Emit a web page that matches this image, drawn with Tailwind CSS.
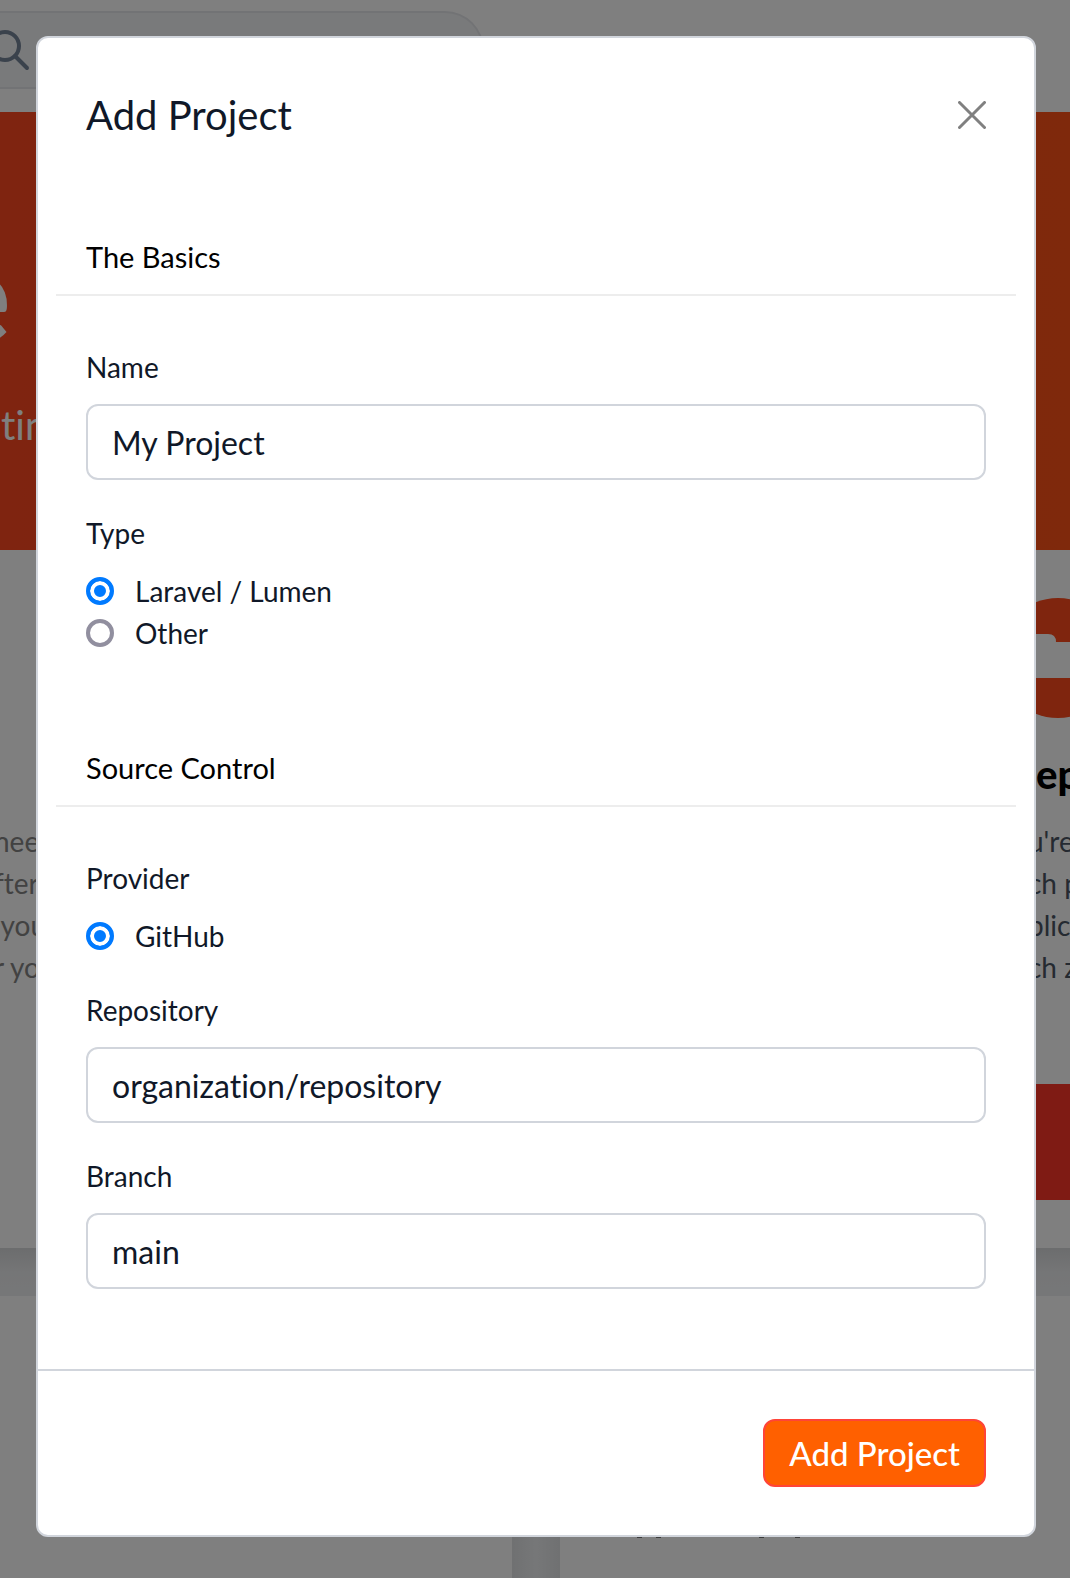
<!DOCTYPE html>
<html lang="en">
<head>
<meta charset="utf-8">
<title>Add Project</title>
<script src="https://cdn.jsdelivr.net/npm/@tailwindcss/browser@4"></script>
</head>
<body class="relative min-h-screen overflow-x-hidden bg-gray-100 font-['Lato','Open_Sans',sans-serif] text-[28px] leading-[42px] text-gray-900 [font-variant-ligatures:none]">

  <!-- Page behind the dialog -->
  <div class="absolute inset-0 flex flex-col overflow-hidden" aria-hidden="true">
    <div class="h-28 shrink-0 bg-white pt-[11px]">
      <div class="flex h-[78px] w-[484px] items-center rounded-r-full border-2 border-l-0 border-gray-200 bg-gray-100">
        <svg class="-ml-3 h-11 w-11 text-[#758499]" viewBox="0 0 44 44" fill="none" stroke="currentColor" stroke-width="4" stroke-linecap="round"><circle cx="17" cy="18" r="14"/><path d="M27 28l12 12"/></svg>
      </div>
    </div>
    <div class="h-[438px] shrink-0 bg-linear-to-r from-[#fe4820] to-[#fe5218] pt-[101px] text-white">
      <div class="-ml-[58px] text-[128px] leading-[160px] font-black">e</div>
      <div class="ml-px pt-[22px] text-[40px] leading-[60px]">tin</div>
    </div>
    <div class="flex h-[698px] shrink-0 justify-between bg-white text-gray-600">
      <div class="-ml-1.5 whitespace-pre pt-[270px] text-[#848484]">need
fter
 you
r your</div>
      <div class="w-[42px] pt-12">
        <svg class="-ml-8 h-[120px] w-[120px] max-w-none" viewBox="0 0 120 120"><circle cx="62" cy="60" r="60" fill="#fe4a1c"/><path d="M0 36h52q8 0 8 8h62v36H0z" fill="#fff"/></svg>
        <div class="ml-2 pt-[26px] text-[40px] leading-[60px] font-black text-black">ep</div>
        <div class="whitespace-pre pt-4 text-[#4b5563]">u're
ch p
plic
ch z</div>
        <div class="mt-24 h-[116px] bg-[#fe3628]"></div>
      </div>
    </div>
    <div class="h-12 shrink-0 bg-linear-to-b from-[#d8dadc] via-[#ebecee] to-[#edeff1]"></div>
    <div class="flex grow bg-white">
      <div class="w-[512px] bg-white"></div>
      <div class="w-12 bg-linear-to-r from-[#e0e2e4] via-[#edeff1] to-[#e0e2e4]"></div>
      <!-- Lower edge of the card's heading -->
      <svg class="mt-60 ml-[77px] h-[2px] w-[166px]" viewBox="0 0 166 2" fill="#777"><path d="M0 0h5v2H0zM19 0h5v2h-5zM122 0h5v2h-5zM158 0h5v2h-5z"/></svg>
    </div>
  </div>
  <div class="absolute inset-0 bg-black/50"></div>

  <div role="dialog" aria-labelledby="dialog-title" class="relative mt-9 mr-[34px] mb-9 ml-9 rounded-xl border-2 border-gray-300 bg-white">
    <header class="flex items-center justify-between px-12 pt-[47px] pb-[49px]">
      <h2 id="dialog-title" class="text-[40px] leading-[60px]">Add Project</h2>
      <button type="button" aria-label="Close" class="text-[#808080]">
        <svg class="h-7 w-7" viewBox="0 0 28 28" fill="none" stroke="currentColor" stroke-width="3" stroke-linecap="round"><path d="M1.500 1.500l25 25M26.500 1.500l-25 25"/></svg>
      </button>
    </header>

    <form id="project-form" class="px-[18px] pb-20">
      <section>
        <h3 class="border-b-2 border-[#ededed] px-[30px] pt-[42px] pb-4 text-[29px] text-black">The Basics</h3>
        <div class="flex flex-col gap-8 px-[30px] pt-[50px]">
          <div class="flex flex-col gap-4">
            <label for="name">Name</label>
            <input id="name" type="text" value="My Project" class="h-[76px] w-full rounded-xl border-2 border-gray-300 px-6 text-[32px]">
          </div>
          <fieldset>
            <legend class="mb-4">Type</legend>
            <label class="flex items-center gap-[21px]"><input type="radio" name="type" checked class="h-7 w-7 appearance-none rounded-full border-4 border-[#918f9f] checked:border-[#007aff] checked:bg-[#007aff] checked:shadow-[inset_0_0_0_4px_#fff]">Laravel / Lumen</label>
            <label class="flex items-center gap-[21px]"><input type="radio" name="type" class="h-7 w-7 appearance-none rounded-full border-4 border-[#918f9f] checked:border-[#007aff] checked:bg-[#007aff] checked:shadow-[inset_0_0_0_4px_#fff]">Other</label>
          </fieldset>
        </div>
      </section>

      <section class="pt-[51px]">
        <h3 class="border-b-2 border-[#ededed] px-[30px] pt-[42px] pb-4 text-[29px] text-black">Source Control</h3>
        <div class="flex flex-col gap-8 px-[30px] pt-[50px]">
          <fieldset>
            <legend class="mb-4">Provider</legend>
            <label class="flex items-center gap-[21px]"><input type="radio" name="provider" checked class="h-7 w-7 appearance-none rounded-full border-4 border-[#918f9f] checked:border-[#007aff] checked:bg-[#007aff] checked:shadow-[inset_0_0_0_4px_#fff]">GitHub</label>
          </fieldset>
          <div class="flex flex-col gap-4">
            <label for="repository">Repository</label>
            <input id="repository" type="text" value="organization/repository" class="h-[76px] w-full rounded-xl border-2 border-gray-300 px-6 text-[32px]">
          </div>
          <div class="flex flex-col gap-4">
            <label for="branch">Branch</label>
            <input id="branch" type="text" value="main" class="h-[76px] w-full rounded-xl border-2 border-gray-300 px-6 text-[32px]">
          </div>
        </div>
      </section>
    </form>

    <footer class="flex justify-end border-t-2 border-gray-300 p-12">
      <button type="submit" form="project-form" class="h-[68px] rounded-xl border-2 border-[#ff4438] bg-[#ff6000] px-6 text-[33px] font-medium text-white">Add Project</button>
    </footer>
  </div>
</body>
</html>
